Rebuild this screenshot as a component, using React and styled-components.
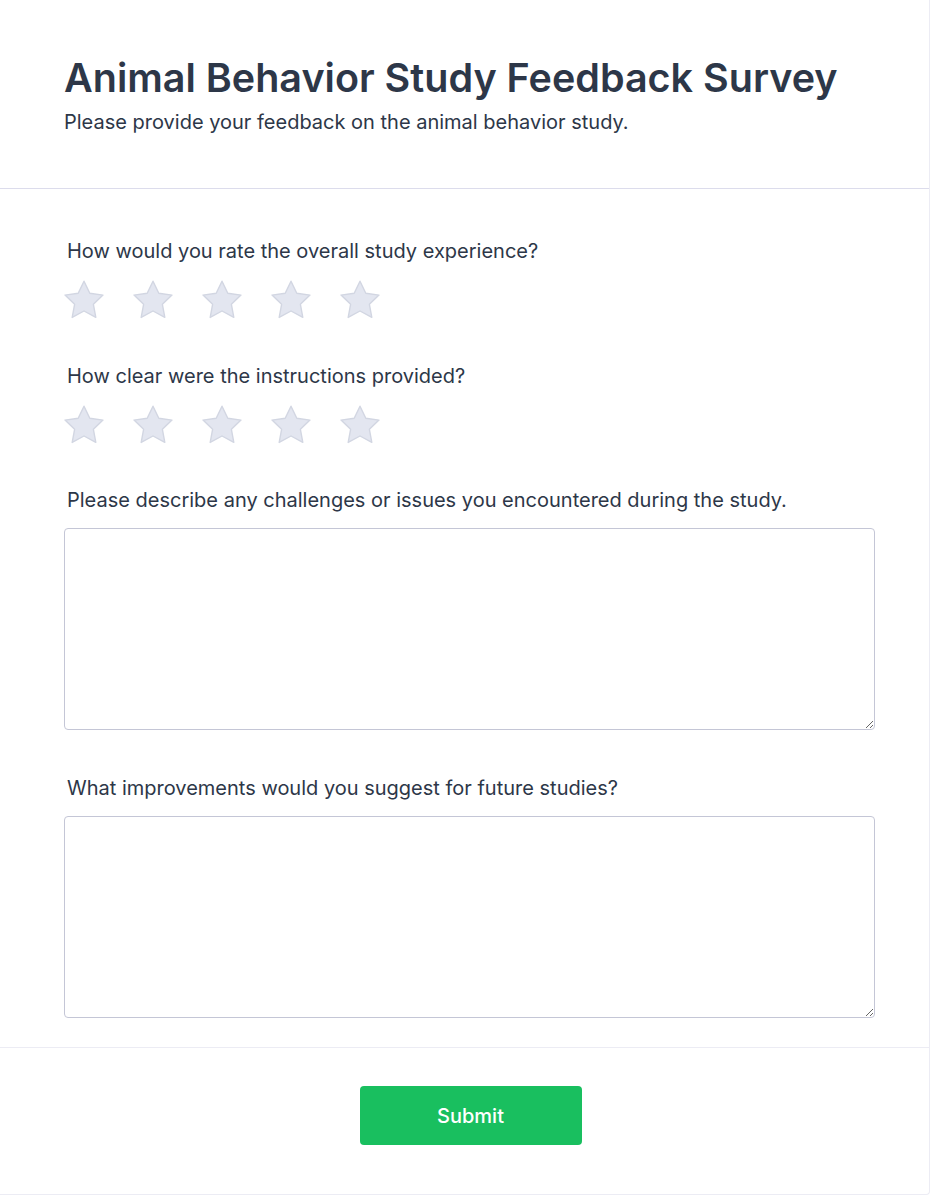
import React from "react";
import styled, { createGlobalStyle } from "styled-components";

const Global = createGlobalStyle`
  html, body { margin: 0; padding: 0; background: #ffffff; }
  body { font-family: Inter, "Noto Sans", sans-serif; color: #2d3748; }
  * { box-sizing: border-box; }
`;

const Card = styled.div`
  width: 930px;
  min-height: 1195px;
  background: #ffffff;
  border-right: 1px solid #ececf4;
  border-bottom: 1px solid #ececf4;
  border-bottom-right-radius: 4px;
`;

const Header = styled.header`
  padding: 54px 54px 52px 64px;
  border-bottom: 1px solid #dcdcec;
`;

const Title = styled.h1`
  margin: 0;
  font-size: 39.5px;
  line-height: 48px;
  font-weight: 600;
  color: #2d3748;
`;

const Subtitle = styled.p`
  margin: 6px 0 0;
  font-size: 20px;
  line-height: 28px;
  font-weight: 400;
  color: #2d3748;
`;

const Form = styled.form`
  padding: 48px 54px 29px 64px;
  display: flex;
  flex-direction: column;
  gap: 42px;
`;

const Question = styled.div`
  display: flex;
  flex-direction: column;
  gap: ${(p) => p.$gap}px;
  margin-top: ${(p) => p.$shift || 0}px;
`;

const Label = styled.label`
  font-size: 20px;
  line-height: 28px;
  font-weight: 400;
  color: #2d3748;
  padding-left: 3px;
`;

const Stars = styled.div`
  display: flex;
  gap: 29px;
`;

const StarButton = styled.button`
  border: none;
  background: none;
  padding: 0;
  width: 40px;
  height: 40px;
  cursor: pointer;
  display: flex;
  align-items: center;
  justify-content: center;
`;

const TextArea = styled.textarea`
  display: block;
  width: 100%;
  height: 202px;
  border: 1px solid #c4c6d6;
  border-radius: 4px;
  padding: 10px 12px;
  font-family: Inter, sans-serif;
  font-size: 16px;
  color: #2d3748;
  resize: vertical;
  outline: none;
`;

const Footer = styled.div`
  border-top: 1px solid #ececf4;
  display: flex;
  justify-content: center;
  padding: 38px 0 48px 12px;
`;

const SubmitButton = styled.button`
  width: 222px;
  height: 59px;
  background: #19bf5f;
  color: #ffffff;
  border: none;
  border-radius: 4px;
  font-family: Inter, sans-serif;
  font-size: 20px;
  font-weight: 500;
  cursor: pointer;
`;

const Star = () => (
  <svg width="40" height="40" viewBox="2 2 20 20">
    <path
      d="M12 2.6l2.9 6.05 6.6.9-4.8 4.6 1.2 6.55L12 17.5l-5.9 3.2 1.2-6.55-4.8-4.6 6.6-.9z"
      fill="#e3e6f0"
      stroke="#d2d6e2"
      strokeWidth="0.7"
      strokeLinejoin="round"
    />
  </svg>
);

const RatingRow = () => (
  <Stars>
    {[1, 2, 3, 4, 5].map((n) => (
      <StarButton type="button" key={n} aria-label={`${n} star`}>
        <Star />
      </StarButton>
    ))}
  </Stars>
);

export default function App() {
  return (
    <>
      <Global />
      <Card>
        <Header>
          <Title>Animal Behavior Study Feedback Survey</Title>
          <Subtitle>Please provide your feedback on the animal behavior study.</Subtitle>
        </Header>
        <Form onSubmit={(e) => e.preventDefault()}>
          <Question $gap={15}>
            <Label>How would you rate the overall study experience?</Label>
            <RatingRow />
          </Question>
          <Question $gap={15}>
            <Label>How clear were the instructions provided?</Label>
            <RatingRow />
          </Question>
          <Question $gap={14} $shift={-1}>
            <Label>Please describe any challenges or issues you encountered during the study.</Label>
            <TextArea />
          </Question>
          <Question $gap={14} $shift={2}>
            <Label>What improvements would you suggest for future studies?</Label>
            <TextArea />
          </Question>
        </Form>
        <Footer>
          <SubmitButton type="button">Submit</SubmitButton>
        </Footer>
      </Card>
    </>
  );
}
